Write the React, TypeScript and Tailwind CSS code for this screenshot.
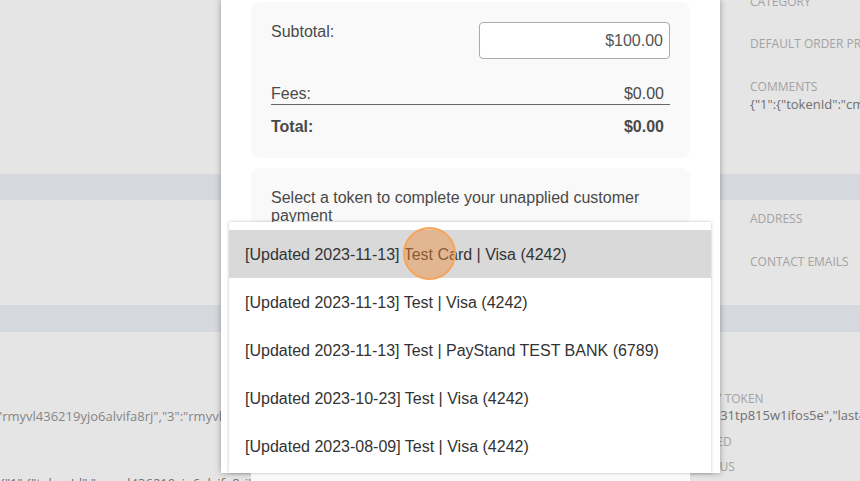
import React from 'react'

const tokens = [
  '[Updated 2023-11-13] Test Card | Visa (4242)',
  '[Updated 2023-11-13] Test | Visa (4242)',
  '[Updated 2023-11-13] Test | PayStand TEST BANK (6789)',
  '[Updated 2023-10-23] Test | Visa (4242)',
  '[Updated 2023-08-09] Test | Visa (4242)',
  '[Updated 2023-07-21] Test | Visa (4242)',
]

function Label({ children, className = '' }: { children: React.ReactNode; className?: string }) {
  return (
    <div className={`text-[12px] leading-[16px] uppercase text-[#a3a3a3] whitespace-nowrap ${className}`}>
      {children}
    </div>
  )
}

function Value({ children, className = '' }: { children: React.ReactNode; className?: string }) {
  return (
    <div className={`text-[13px] leading-[17px] text-[#707070] whitespace-nowrap ${className}`}>
      {children}
    </div>
  )
}

export default function App() {
  return (
    <div className="relative w-[860px] h-[481px] overflow-hidden bg-[#e5e5e5] font-['Open_Sans',sans-serif]">
      {/* Background record page */}
      <div className="flex flex-col">
        <div className="h-[174px] pl-[750px]">
          <Label className="-mt-[6px]">Category</Label>
          <Label className="mt-[26px]">Default Order Processor</Label>
          <Label className="mt-[27px]">Comments</Label>
          <Value className="mt-[1px] text-[#5e5e5e]">{'{"1":{"tokenId":"cmyvl436219yjo6alvifa8rj"}}'}</Value>
        </div>
        <div className="h-[26px] bg-[#d5d8dd]" />
        <div className="h-[105px] pl-[750px]">
          <Label className="mt-[11px]">Address</Label>
          <Label className="mt-[27px]">Contact Emails</Label>
        </div>
        <div className="h-[27px] bg-[#d5d8dd]" />
        <div className="flex h-[149px] overflow-hidden">
          <div className="w-[700px] shrink-0 overflow-hidden pt-[76px]">
            <Value className="-ml-[3px] text-[#858585]">
              {'"rmyvl436219yjo6alvifa8rj","3":"rmyvl436219yjo6alvifa8rj","4":"rmyvl436219yjo6alvifa8rj"'}
            </Value>
            <Value className="mt-[50px] text-[#9a9a9a]">
              {'{"1":{"tokenId":"cmyvl436219yjo6alvifa8rj","last4":"4242","brand":"visa"},"2":{"tokenId":"rmyvl4"}}'}
            </Value>
          </div>
          <div className="shrink-0 pt-[59px]">
            <Label>Pay Token</Label>
            <Value className="ml-[15px]">{'"31tp815w1ifos5e","last4":"4242"}'}</Value>
            <Label className="mt-[10px] -ml-[5px]">Saved</Label>
            <Label className="mt-[9px] -ml-[8px]">Status</Label>
          </div>
        </div>
      </div>

      {/* Payment modal */}
      <div className="absolute left-[221px] top-0 w-[499px] h-[473px] bg-white shadow-[0_0_6px_rgba(0,0,0,0.35)] px-[30px] pt-[2px] font-['Liberation_Sans',Arial,sans-serif] text-[16px] leading-[18px] text-[#4a4a4a]">
        <div className="rounded-[8px] bg-[#f9f9f9] px-5 pt-5 pb-[22px]">
          <div className="flex justify-between items-start">
            <span className="pt-[1px]">Subtotal:</span>
            <div className="w-[191px] h-[37px] flex items-center justify-end border border-[#aaaaaa] rounded-[4px] bg-white pr-[6px] pt-[1px] text-[#555]">
              $100.00
            </div>
          </div>
          <div className="mt-[25px] flex justify-between pt-[1px] pb-[1px] border-b border-[#666]">
            <span>Fees:</span>
            <span className="pr-[6px]">$0.00</span>
          </div>
          <div className="mt-[12px] pt-[1px] flex justify-between font-bold">
            <span>Total:</span>
            <span className="pr-[6px]">$0.00</span>
          </div>
        </div>
        <div className="mt-[10px] h-[320px] rounded-[8px] bg-[#f9f9f9] px-5 pt-[21px]">
          <p>Select a token to complete your unapplied customer payment</p>
        </div>
      </div>

      {/* Token dropdown */}
      <div className="absolute left-[229px] top-[222px] w-[482px] h-[251px] overflow-hidden bg-white pt-[8px] shadow-[0_0_3px_rgba(0,0,0,0.25)] font-['Liberation_Sans',Arial,sans-serif] text-[16px] text-[#333]">
        {tokens.map((t, i) => (
          <div
            key={t + i}
            className={`h-[48px] flex items-center px-4 pt-[2px] whitespace-nowrap ${i === 0 ? 'bg-[#d9d9d9]' : ''}`}
          >
            {t}
          </div>
        ))}
      </div>

      {/* Click indicator */}
      <div className="absolute left-[403px] top-[227px] w-[53px] h-[53px] rounded-full border-2 border-[#f5a55a] bg-[rgba(240,140,60,0.45)]" />
    </div>
  )
}
